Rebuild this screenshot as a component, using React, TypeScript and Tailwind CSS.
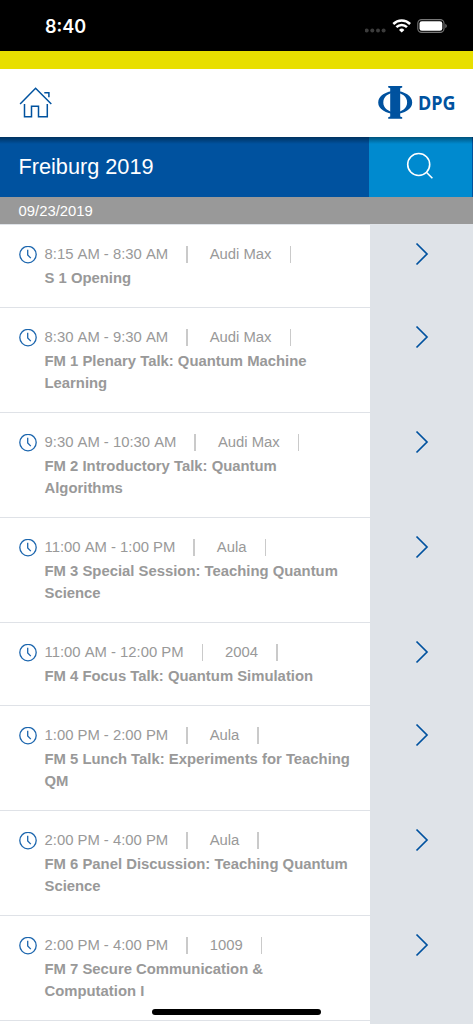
interface Session {
  time: string;
  room: string;
  title: string;
}

const SESSIONS: Session[] = [
  { time: "8:15 AM - 8:30 AM", room: "Audi Max", title: "S 1 Opening" },
  {
    time: "8:30 AM - 9:30 AM",
    room: "Audi Max",
    title: "FM 1 Plenary Talk: Quantum Machine Learning",
  },
  {
    time: "9:30 AM - 10:30 AM",
    room: "Audi Max",
    title: "FM 2 Introductory Talk: Quantum Algorithms",
  },
  {
    time: "11:00 AM - 1:00 PM",
    room: "Aula",
    title: "FM 3 Special Session: Teaching Quantum Science",
  },
  {
    time: "11:00 AM - 12:00 PM",
    room: "2004",
    title: "FM 4 Focus Talk: Quantum Simulation",
  },
  {
    time: "1:00 PM - 2:00 PM",
    room: "Aula",
    title: "FM 5 Lunch Talk: Experiments for Teaching QM",
  },
  {
    time: "2:00 PM - 4:00 PM",
    room: "Aula",
    title: "FM 6 Panel Discussion: Teaching Quantum Science",
  },
  {
    time: "2:00 PM - 4:00 PM",
    room: "1009",
    title: "FM 7 Secure Communication & Computation I",
  },
];

function StatusBar() {
  return (
    <div className="flex h-[50.5px] shrink-0 items-start justify-between bg-black pr-[24px] pl-[45px] text-white">
      <span className="mt-[15px] font-['Inter',sans-serif] text-[18px] leading-6 font-semibold">
        8:40
      </span>
      <div className="mt-[18px] flex">
        <svg width="22" height="16" viewBox="0 0 22 16" fill="#3c3c3c">
          <circle cx="1.7" cy="12.6" r="2" />
          <circle cx="7.3" cy="12.6" r="2" />
          <circle cx="13" cy="12.6" r="2" />
          <circle cx="18.6" cy="12.6" r="2" />
        </svg>
        <svg
          className="ml-[5px]"
          width="20"
          height="16"
          viewBox="0 0 20 16"
          fill="none"
          stroke="white"
          strokeWidth="2.5"
        >
          <path d="M1.3 6a12 12 0 0 1 16.8 0" />
          <path d="M4.4 9.2a7.6 7.6 0 0 1 10.6 0" />
          <path d="M9.7 14.6 7 11.9a3.9 3.9 0 0 1 5.4 0Z" fill="white" stroke="none" />
        </svg>
        <svg className="ml-[5px]" width="32" height="16" viewBox="0 0 32 16">
          <rect
            x="0.8"
            y="1.6"
            width="26.2"
            height="12.8"
            rx="3.8"
            fill="none"
            stroke="#777"
            strokeWidth="1.1"
          />
          <rect x="2.5" y="3.2" width="22.8" height="9.6" rx="2.3" fill="white" />
          <path d="M28.3 5.8c2 .8 2 3.6 0 4.4Z" fill="#777" />
        </svg>
      </div>
    </div>
  );
}

function HomeIcon() {
  return (
    <svg
      width="34"
      height="34"
      viewBox="0 0 34 34"
      fill="none"
      stroke="#00529f"
      strokeWidth="1.5"
    >
      <path d="M1.1 18 16.6 2.3 32.3 18" />
      <path d="M5.5 18v12.7h7V20.3h7v10.4h8.8V18" />
      <path d="M25.3 6.7h4.6v4.5" />
    </svg>
  );
}

function Logo() {
  return (
    <div className="flex items-center text-[#00529f]">
      <svg width="35" height="34" viewBox="0 0 35 34" fill="currentColor">
        <path d="M10.2 0h14v1.6l-2 .7v28.2l2 .7v1.6h-14v-1.6l2-.7V2.3l-2-.7Z" />
        <path
          fillRule="evenodd"
          d="M17.2 5A17 11.4 0 0 0 17.200 27.800A17 11.4 0 0 0 17.200 5ZM17.200 6.400A11.900 10 0 0 1 17.200 26.400A11.900 10 0 0 1 17.200 6.400Z"
        />
      </svg>
      <span className="ml-[5px] w-[38px] font-['Open_Sans',sans-serif] text-[19.5px] leading-6 font-bold">
        <span className="inline-block origin-left scale-x-[0.92]">DPG</span>
      </span>
    </div>
  );
}

function ClockIcon() {
  return (
    <svg
      className="mt-[3px] shrink-0"
      width="18"
      height="18"
      viewBox="0 0 18 18"
      fill="none"
      stroke="#1c66ae"
      strokeWidth="1.3"
    >
      <circle cx="9" cy="8.6" r="8.2" />
      <path d="M8.7 3.8v5.1l3.1 3.2" />
    </svg>
  );
}

function SessionRow({ time, room, title }: Session) {
  return (
    <li className="flex">
      <div className="flex w-[370px] border-b-[1.1px] border-[#dfe2e7] pt-[18px] pb-[17.4px] pl-[18.5px]">
        <ClockIcon />
        <div className="ml-[8px] w-[312px]">
          <div className="mb-[2px] flex h-[23px] items-center leading-[23px]">
            <span className="flex gap-[4.1px]">
              {time.split(" ").map((part, i) => (
                <span key={i}>{part}</span>
              ))}
            </span>
            <span className="ml-[18px] h-[17px] w-[1.5px] bg-[#cacaca]" />
            <span className="ml-[22px]">{room}</span>
            <span className="ml-[18px] h-[17px] w-[1.5px] bg-[#cacaca]" />
          </div>
          <h2 className="leading-[21.8px] font-bold">{title}</h2>
        </div>
      </div>
      <div className="flex flex-1 justify-center bg-[#dfe3e8] pt-[17px]">
        <svg
          width="14"
          height="24"
          viewBox="0 0 14 24"
          fill="none"
          stroke="#00529f"
          strokeWidth="1.7"
        >
          <path d="M1.5 1.5 12 12 1.5 22.5" />
        </svg>
      </div>
    </li>
  );
}

export default function App() {
  return (
    <div className="relative flex h-[1024px] w-[473px] flex-col overflow-hidden bg-white font-['Liberation_Sans',Arial,sans-serif] text-[14.85px] text-[#999]">
      <StatusBar />
      <div className="h-[18.5px] shrink-0 bg-[#e8df00]" />
      <header className="flex h-[68px] shrink-0 items-center justify-between pr-[17px] pl-[19px]">
        <HomeIcon />
        <Logo />
      </header>

      <div className="flex h-[60px] shrink-0 bg-[#00529f] bg-linear-to-b from-black/40 to-transparent to-[7px]">
        <h1 className="flex-1 pl-[18.5px] text-[21.7px] leading-[59px] text-white">
          Freiburg 2019
        </h1>
        <div className="mr-[1.5px] flex w-[103px] items-center justify-center bg-[#008acf] bg-linear-to-b from-black/40 to-transparent to-[7px]">
          <svg
            className="mb-[2px]"
            width="28"
            height="28"
            viewBox="0 0 28 28"
            fill="none"
            stroke="white"
            strokeWidth="1.6"
          >
            <circle cx="12.7" cy="12.5" r="11" />
            <path d="m20.4 20.2 6 6" />
          </svg>
        </div>
      </div>

      <div className="h-[27px] shrink-0 bg-[#999] pl-[18.5px] leading-[28px] text-white">
        09/23/2019
      </div>

      <ul className="shrink-0 border-t border-[#dfe3e8]">
        {SESSIONS.map((session) => (
          <SessionRow key={session.title} {...session} />
        ))}
        <li className="flex h-6">
          <div className="w-[370px]" />
          <div className="flex-1 bg-[#dfe3e8]" />
        </li>
      </ul>

      {/* home indicator */}
      <div className="absolute top-[1008.5px] left-[152px] h-[6px] w-[169px] rounded-full bg-black" />
    </div>
  );
}
